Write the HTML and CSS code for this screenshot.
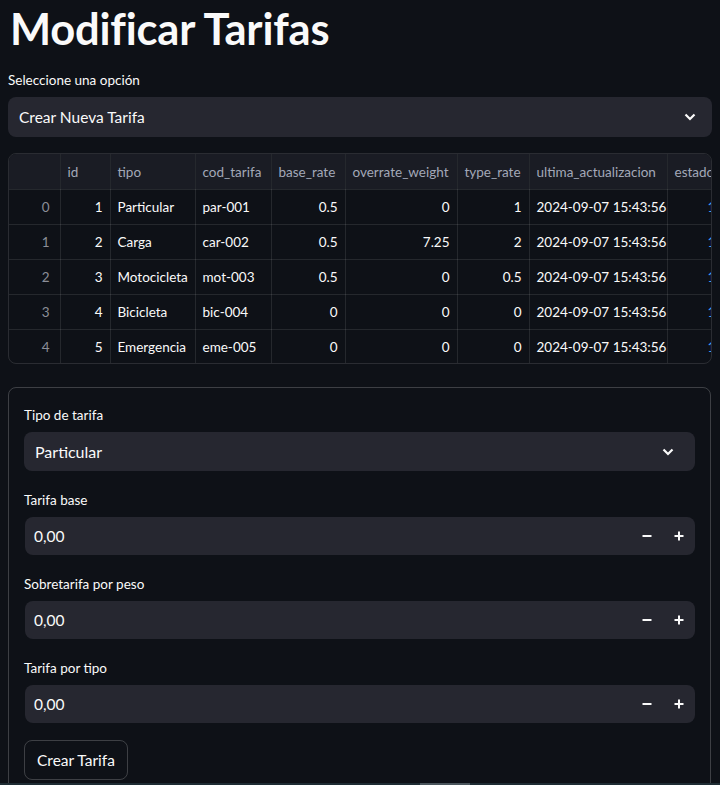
FILE: index.html
```html
<!DOCTYPE html>
<html lang="es">
<head>
<meta charset="utf-8">
<title>Modificar Tarifas</title>
<link rel="stylesheet" href="styles.css">
</head>
<body>
<main class="page">
  <h1 class="title">Modificar Tarifas</h1>

  <div class="field">
    <label class="label">Seleccione una opción</label>
    <div class="select">
      <span>Crear Nueva Tarifa</span>
      <svg class="chev" width="12" height="8" viewBox="0 0 12 8"><path d="M1.5 1.5 L6 6 L10.5 1.5" fill="none" stroke="#fafafa" stroke-width="2.2"/></svg>
    </div>
  </div>

  <div class="table-wrap">
    <table class="df">
      <colgroup>
        <col class="c-idx"><col class="c-id"><col class="c-tipo"><col class="c-cod"><col class="c-base"><col class="c-over"><col class="c-type"><col class="c-ult"><col class="c-est">
      </colgroup>
      <thead>
        <tr><th></th><th>id</th><th>tipo</th><th>cod_tarifa</th><th>base_rate</th><th>overrate_weight</th><th>type_rate</th><th>ultima_actualizacion</th><th>estado</th></tr>
      </thead>
      <tbody>
        <tr><td class="idx">0</td><td class="num">1</td><td>Particular</td><td>par-001</td><td class="num">0.5</td><td class="num">0</td><td class="num">1</td><td>2024-09-07 15:43:56</td><td class="blue">1</td></tr>
        <tr><td class="idx">1</td><td class="num">2</td><td>Carga</td><td>car-002</td><td class="num">0.5</td><td class="num">7.25</td><td class="num">2</td><td>2024-09-07 15:43:56</td><td class="blue">1</td></tr>
        <tr><td class="idx">2</td><td class="num">3</td><td>Motocicleta</td><td>mot-003</td><td class="num">0.5</td><td class="num">0</td><td class="num">0.5</td><td>2024-09-07 15:43:56</td><td class="blue">1</td></tr>
        <tr><td class="idx">3</td><td class="num">4</td><td>Bicicleta</td><td>bic-004</td><td class="num">0</td><td class="num">0</td><td class="num">0</td><td>2024-09-07 15:43:56</td><td class="blue">1</td></tr>
        <tr><td class="idx">4</td><td class="num">5</td><td>Emergencia</td><td>eme-005</td><td class="num">0</td><td class="num">0</td><td class="num">0</td><td>2024-09-07 15:43:56</td><td class="blue">1</td></tr>
      </tbody>
    </table>
  </div>

  <form class="form">
    <div class="field">
      <label class="label">Tipo de tarifa</label>
      <div class="select">
        <span>Particular</span>
        <svg class="chev" width="12" height="8" viewBox="0 0 12 8"><path d="M1.5 1.5 L6 6 L10.5 1.5" fill="none" stroke="#fafafa" stroke-width="2.2"/></svg>
      </div>
    </div>

    <div class="field">
      <label class="label">Tarifa base</label>
      <div class="number">
        <span class="val">0,00</span>
        <span class="step"><svg width="10" height="10" viewBox="0 0 10 10"><path d="M0.5 5 H9.5" stroke="#fafafa" stroke-width="2"/></svg></span>
        <span class="step"><svg width="10" height="10" viewBox="0 0 10 10"><path d="M0.5 5 H9.5 M5 0.5 V9.5" stroke="#fafafa" stroke-width="2"/></svg></span>
      </div>
    </div>

    <div class="field">
      <label class="label">Sobretarifa por peso</label>
      <div class="number">
        <span class="val">0,00</span>
        <span class="step"><svg width="10" height="10" viewBox="0 0 10 10"><path d="M0.5 5 H9.5" stroke="#fafafa" stroke-width="2"/></svg></span>
        <span class="step"><svg width="10" height="10" viewBox="0 0 10 10"><path d="M0.5 5 H9.5 M5 0.5 V9.5" stroke="#fafafa" stroke-width="2"/></svg></span>
      </div>
    </div>

    <div class="field">
      <label class="label">Tarifa por tipo</label>
      <div class="number">
        <span class="val">0,00</span>
        <span class="step"><svg width="10" height="10" viewBox="0 0 10 10"><path d="M0.5 5 H9.5" stroke="#fafafa" stroke-width="2"/></svg></span>
        <span class="step"><svg width="10" height="10" viewBox="0 0 10 10"><path d="M0.5 5 H9.5 M5 0.5 V9.5" stroke="#fafafa" stroke-width="2"/></svg></span>
      </div>
    </div>

    <button type="button" class="btn">Crear Tarifa</button>
  </form>
</main>
<div class="hscroll"><div class="thumb"></div></div>
</body>
</html>
```

FILE: styles.css
```css
html, body {
  margin: 0;
  padding: 0;
  background: #0e1117;
  overflow: hidden;
  height: 785px;
}
body {
  font-family: Lato, "Source Sans Pro", "Noto Sans", sans-serif;
  color: #fafafa;
}
.page {
  padding: 0 8px;
  width: 704px;
}
.title {
  margin: 0;
  padding: 2px 0 0 2px;
  font-size: 43.5px;
  font-weight: 700;
  line-height: 52px;
  letter-spacing: -0.2px;
}
.field {
  display: flex;
  flex-direction: column;
}
.page > .field {
  margin-top: 18px;
}
.label {
  font-size: 13.5px;
  line-height: 16px;
  height: 17px;
  margin-bottom: 8px;
}
.select {
  height: 40px;
  background: #262730;
  border-radius: 8px;
  display: flex;
  align-items: center;
  justify-content: space-between;
  padding: 0 16px 0 11px;
  font-size: 15.5px;
}
.chev { display: block; }
.table-wrap {
  margin-top: 16px;
  border: 1px solid rgba(250,250,250,0.12);
  border-radius: 8px;
  overflow: hidden;
  height: 209px;
  width: 702px;
}
.df {
  border-collapse: collapse;
  table-layout: fixed;
  width: 719px;
  font-size: 13.5px;
}
.c-idx { width: 51px; }
.c-id { width: 50px; }
.c-tipo { width: 85px; }
.c-cod { width: 76px; }
.c-base { width: 74px; }
.c-over { width: 112px; }
.c-type { width: 72px; }
.c-ult { width: 138px; }
.c-est { width: 61px; }
.df th, .df td {
  border-right: 1px solid rgba(250,250,250,0.1);
  border-bottom: 1px solid rgba(250,250,250,0.1);
  padding: 0 7px;
  white-space: nowrap;
  overflow: hidden;
  text-align: left;
}
.df th {
  height: 35px;
  background: #1a1c24;
  color: #a3a8b8;
  font-weight: 400;
}
.df td {
  height: 34px;
  color: #fafafa;
}
.df tbody tr:last-child td { border-bottom: none; }
.df td.num { text-align: right; }
.df td.idx { text-align: right; color: #8b8e98; padding-right: 10px; }
.df td.blue { color: #3d9df3; padding-left: 40px; }
.form {
  margin-top: 23px;
  border: 1px solid rgba(250,250,250,0.2);
  border-radius: 8px;
  padding: 19px 15px 40px;
  display: flex;
  flex-direction: column;
  gap: 12px;
  width: 671px;
}
.form .field + .field { margin-top: 9px; }
.form .select { height: 39px; padding-left: 11px; padding-right: 21px; font-size: 16px; }
.number {
  height: 38px;
  background: #262730;
  border-radius: 8px;
  display: flex;
  align-items: center;
  padding-left: 9px;
  font-size: 15.5px;
  margin-left: 1px;
}
.val { flex: 1; }
.step {
  width: 32px;
  height: 38px;
  display: flex;
  align-items: center;
  justify-content: center;
}
.btn {
  align-self: flex-start;
  margin-top: 5px;
  height: 40px;
  padding: 0 12px;
  background: transparent;
  color: #fafafa;
  border: 1px solid rgba(250,250,250,0.2);
  border-radius: 8px;
  font-family: inherit;
  font-size: 15.5px;
}
.hscroll {
  position: fixed;
  left: 0;
  right: 0;
  bottom: 0;
  height: 2px;
  background: #1e2c33;
}
.thumb {
  position: absolute;
  left: 420px;
  width: 50px;
  top: 0;
  bottom: 0;
  background: #4a555c;
}
```
